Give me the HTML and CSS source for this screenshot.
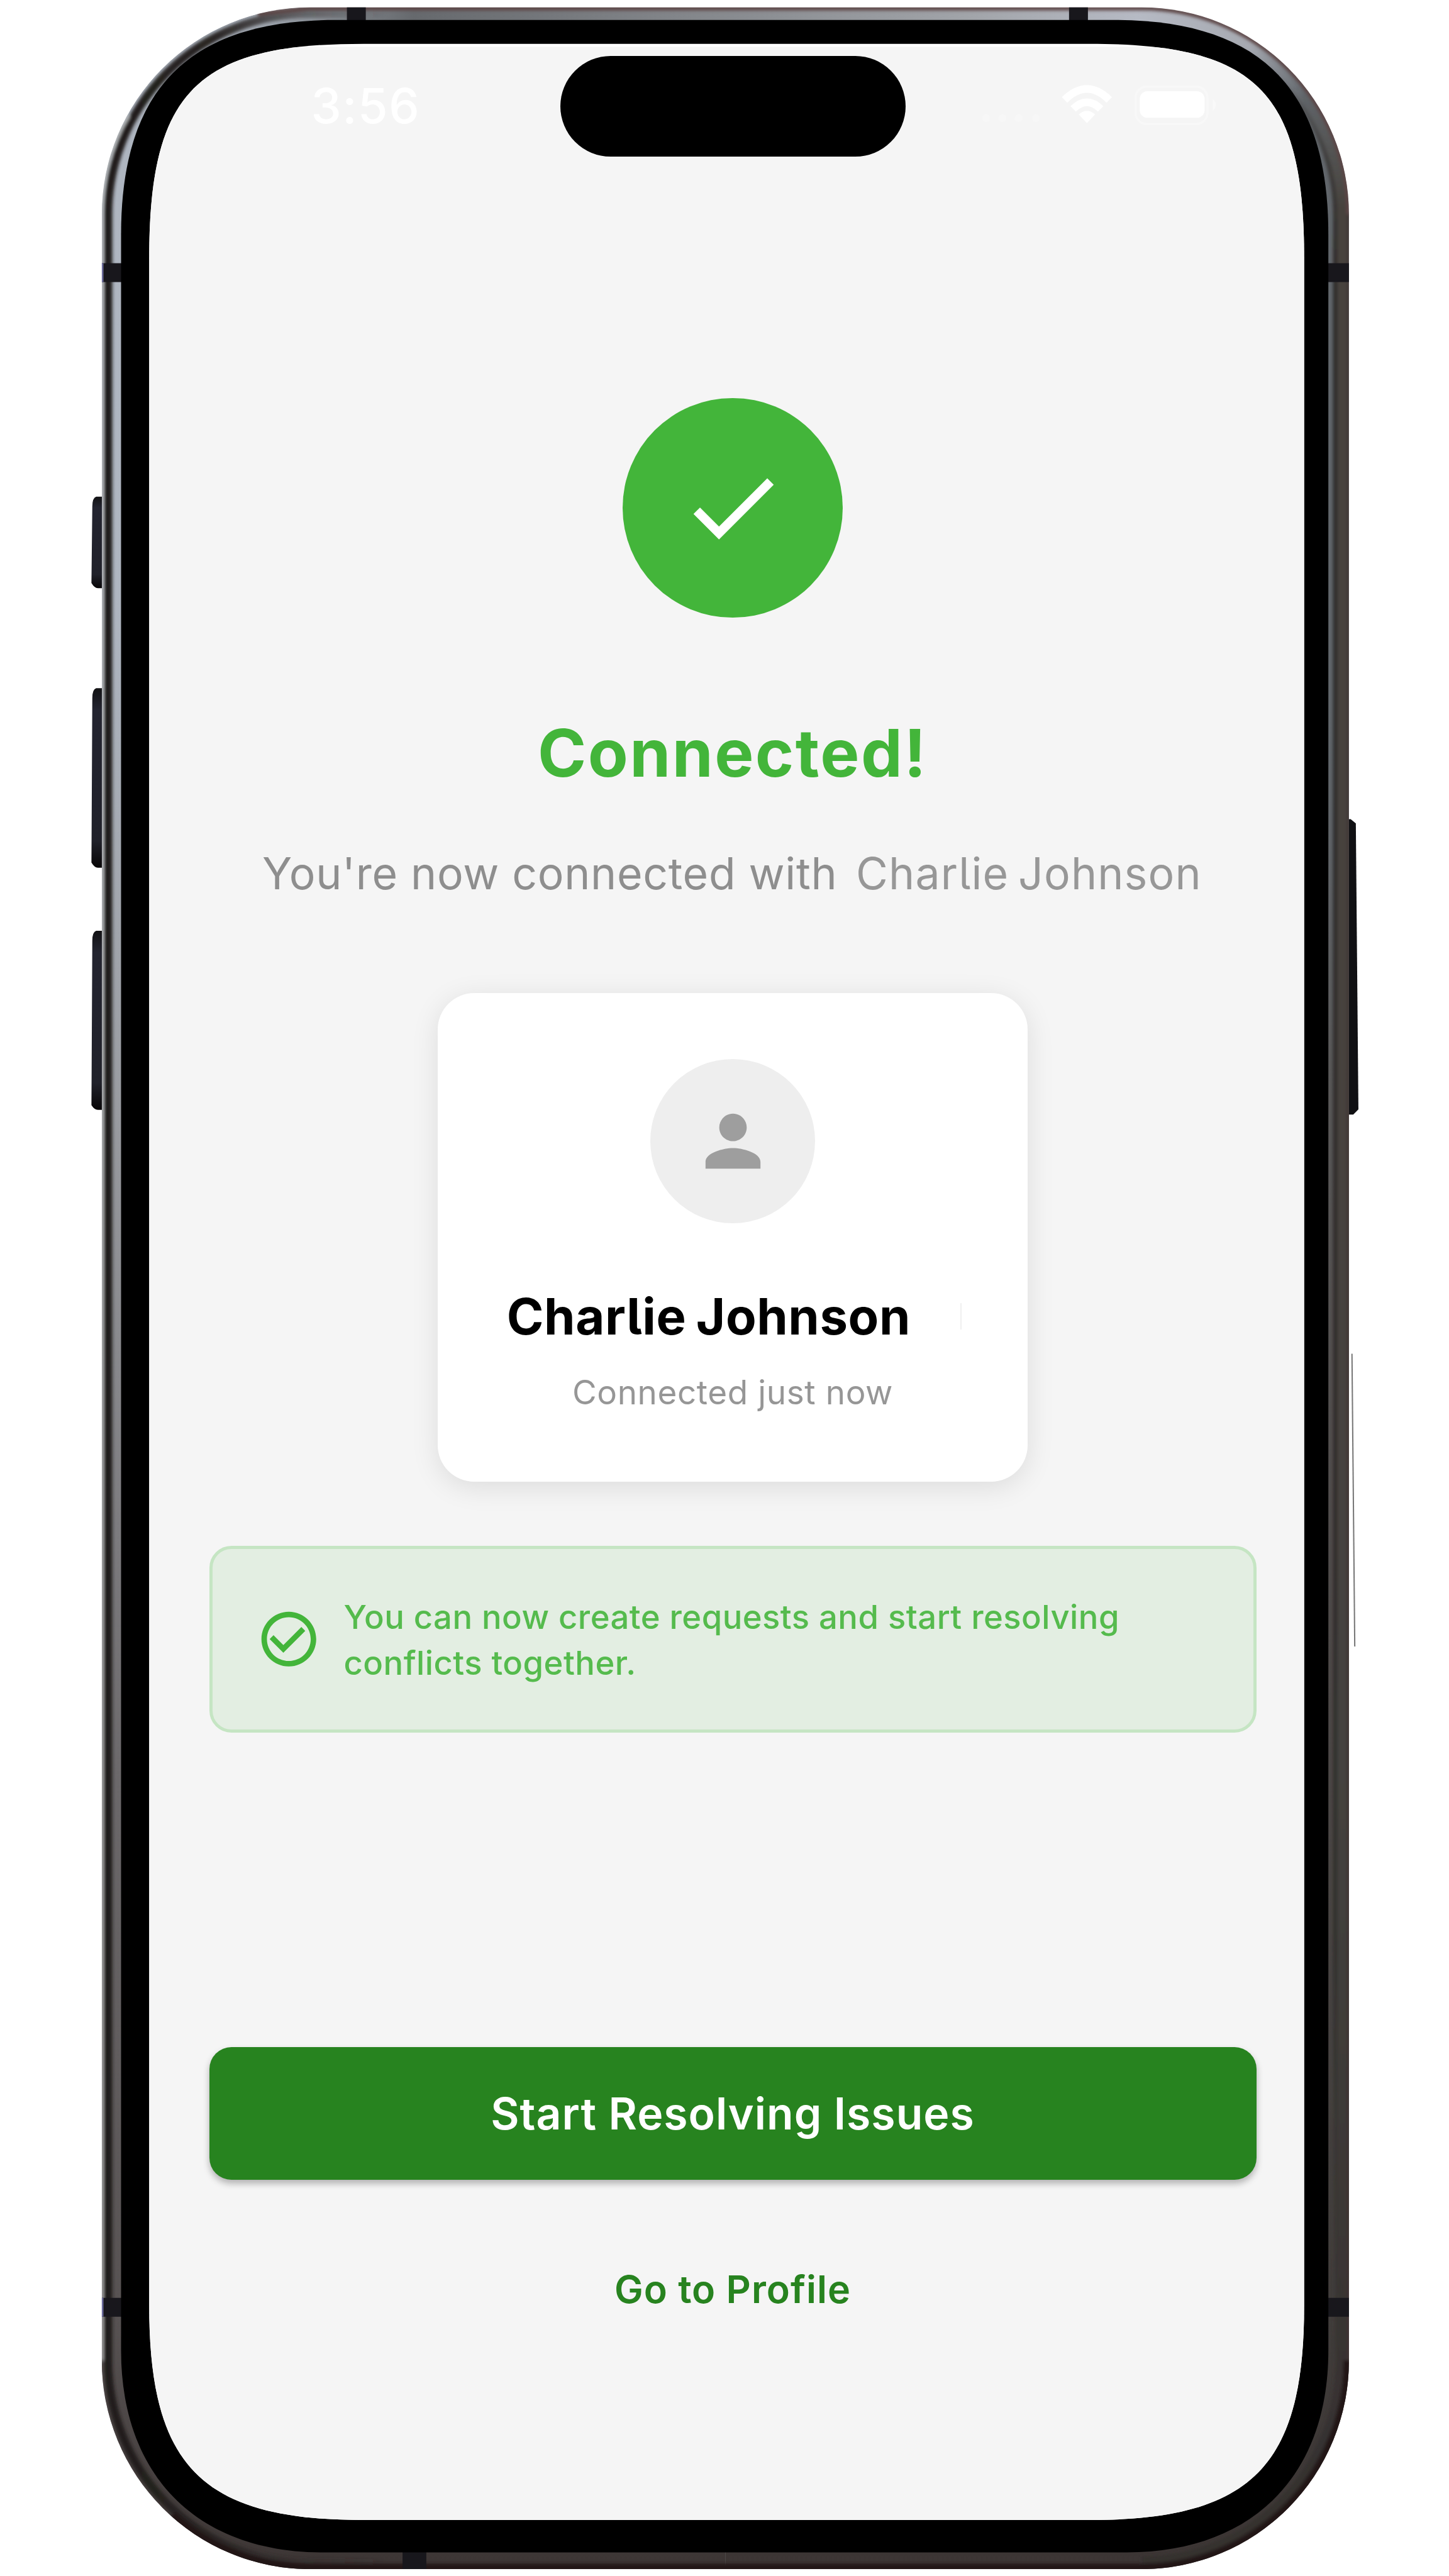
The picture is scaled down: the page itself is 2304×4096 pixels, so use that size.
FILE: index.html
```html
<!DOCTYPE html>
<html lang="en">
<head>
<meta charset="utf-8">
<title>Connected!</title>
<link rel="stylesheet" href="styles.css">
</head>
<body>
<div class="stage">
  <svg class="phone" viewBox="0 0 3375 6000" aria-hidden="true">
    <defs>
      <path id="body" d="M722 17H2659A483 483 0 0 1 3142 500V5498A483 486 0 0 1 2659 5984H722A485 486 0 0 1 237 5498V500A485 483 0 0 1 722 17Z"/>
      <path id="bezel" d="M782 46.500H2594C2935 46.500 3094 206 3094 546V5475C3094 5767 2916 5945 2624 5945H752C460 5945 282 5767 282 5475V546C282 206 441 46.500 782 46.500Z"/>
      <path id="glass" d="M847 102H2538C2927 102 3037.600 213 3037.600 602V5370C3037.600 5746 2914 5869.600 2538 5869.600H847C471 5869.600 347.500 5746 347.500 5370V602C347.500 213 458 102 847 102Z"/>
      <clipPath id="bodyClip"><use href="#body"/></clipPath>
      <clipPath id="glassClip"><use href="#glass"/></clipPath>
      <linearGradient id="metal" gradientUnits="userSpaceOnUse" x1="237" y1="0" x2="3142" y2="0">
        <stop offset="0" stop-color="#b0b7c2"/><stop offset=".13" stop-color="#a0a7b0"/><stop offset=".25" stop-color="#66696d"/>
        <stop offset=".7" stop-color="#a2a5aa"/><stop offset=".83" stop-color="#b6bac4"/><stop offset=".92" stop-color="#a6a9b1"/>
        <stop offset=".965" stop-color="#62676c"/><stop offset="1" stop-color="#62676c"/>
      </linearGradient>
      <linearGradient id="leftShade" gradientUnits="userSpaceOnUse" x1="0" y1="1400" x2="0" y2="5984">
        <stop offset="0" stop-color="#9a9da2" stop-opacity="0"/><stop offset=".26" stop-color="#999ba0"/>
        <stop offset=".6" stop-color="#6b686a"/><stop offset=".88" stop-color="#565151"/><stop offset="1" stop-color="#3c3534"/>
      </linearGradient>
      <linearGradient id="rightShade" gradientUnits="userSpaceOnUse" x1="0" y1="1600" x2="0" y2="5984">
        <stop offset="0" stop-color="#62666b" stop-opacity="0"/><stop offset=".2" stop-color="#5a5959"/>
        <stop offset=".5" stop-color="#4e4a49"/><stop offset=".88" stop-color="#403c3a"/><stop offset="1" stop-color="#3c3534"/>
      </linearGradient>
      <linearGradient id="darkBand" gradientUnits="userSpaceOnUse" x1="237" y1="0" x2="900" y2="0">
        <stop offset="0" stop-color="#1f1c19"/><stop offset=".4" stop-color="#2a2625"/><stop offset="1" stop-color="#332d2d" stop-opacity="0"/>
      </linearGradient>
      <linearGradient id="rightBand" gradientUnits="userSpaceOnUse" x1="0" y1="200" x2="0" y2="5800">
        <stop offset="0" stop-color="#47423d" stop-opacity="0"/><stop offset=".05" stop-color="#47433e"/>
        <stop offset=".7" stop-color="#45433f"/><stop offset="1" stop-color="#35302f"/>
      </linearGradient>
      <linearGradient id="innerBand" gradientUnits="userSpaceOnUse" x1="0" y1="100" x2="0" y2="5600">
        <stop offset="0" stop-color="#4c4d4f" stop-opacity="0"/><stop offset=".05" stop-color="#3e3c3b"/>
        <stop offset=".1" stop-color="#2e2b29"/><stop offset=".8" stop-color="#31302d"/><stop offset="1" stop-color="#35322f" stop-opacity="0"/>
      </linearGradient>
      <filter id="soft" filterUnits="userSpaceOnUse" x="0" y="0" width="3375" height="6000"><feGaussianBlur stdDeviation="4"/></filter>
      <linearGradient id="key" x1="0" y1="0" x2="0" y2="1">
        <stop offset="0" stop-color="#121214"/><stop offset=".12" stop-color="#232430"/><stop offset=".85" stop-color="#20212a"/><stop offset="1" stop-color="#080607"/>
      </linearGradient>
    </defs>

    <!-- side buttons -->
    <g fill="url(#key)">
      <path d="M240 1157H224Q215 1160 215 1180L213 1358Q220 1370 228 1370H240Z"/>
      <path d="M240 1603H224Q215 1606 215 1626L213 2009Q220 2021 228 2021H240Z"/>
      <path d="M240 2168H224Q215 2171 215 2191L213 2574Q220 2585 228 2585H240Z"/>
    </g>
    <path fill="#101013" d="M3138 1908H3146L3158 1918L3164 2584L3152 2596H3138Z"/>
    <path stroke="#777" stroke-width="3" d="M3149 3153L3155.500 3835"/>

    <!-- metal band -->
    <g clip-path="url(#bodyClip)">
      <use href="#body" fill="url(#metal)"/>
      <rect x="230" y="1400" width="1460" height="4600" fill="url(#leftShade)"/>
      <rect x="1690" y="1600" width="1460" height="4400" fill="url(#rightShade)"/>
      <g fill="none" filter="url(#soft)">
        <path stroke="url(#darkBand)" stroke-width="19" d="M900 32H722A470 468 0 0 0 252 500V5498A470 472 0 0 0 722 5970H900"/>
        <path stroke="url(#rightBand)" stroke-width="30" d="M2659 30A470 470 0 0 1 3126 500V5498A470 472 0 0 1 2659 5970"/>
        <path stroke="url(#innerBand)" stroke-width="10" d="M2659 50A452 452 0 0 1 3110 500V5498A452 452 0 0 1 2659 5950"/>
        <path stroke="#5c4544" stroke-width="10" d="M600 32L722 19H2659A481 481 0 0 1 3141 500"/>
        <path stroke="#3f3232" stroke-width="7" d="M3141 500V5498"/>
        <path stroke="#241819" stroke-width="24" d="M3141 5498A482 484 0 0 1 2659 5983H722A484 484 0 0 1 400 5860"/>
        <path stroke="#b9bbbb" stroke-width="6" d="M300 270Q238 370 237 500V5498"/>
      </g>
      <path fill="#18171c" d="M808 10h44v60h-44zM2490 10h44v60h-44zM230 613h60v44h-60zM3080 613h70v44h-70zM230 5352h60v44h-60zM3080 5352h70v44h-70zM937.600 5930h55.400v60h-55.400z"/>
      <path fill="#6a6a9a" d="M237 613h4v44h-4zM237 5352h4v44h-4z"/>
    </g>
    <use href="#bezel"/>
    <use href="#glass" fill="#fff"/>
    <rect x="340" y="109" width="2710" height="5770" fill="#f5f5f5" clip-path="url(#glassClip)"/>
  </svg>

  <main class="screen">
    <header class="status">
      <span class="time">3:56</span>
      <span class="island"></span>
      <svg class="dots" viewBox="0 0 136 20"><g fill="#f7f7f7"><circle cx="10" cy="10" r="9"/><circle cx="48" cy="10" r="9"/><circle cx="86" cy="10" r="9"/><circle cx="126" cy="10" r="9"/></g></svg>
      <svg class="wifi" viewBox="0 0 118 90">
        <path fill="none" stroke="#fff" stroke-width="18" d="M7 36Q59 -15 111 36M27 57Q59 26 91 57"/>
        <path fill="#fff" d="M40 70Q59 53 78 70L59 90Z"/>
      </svg>
      <svg class="battery" viewBox="0 0 196 92">
        <rect x="2.500" y="2.500" width="167" height="87" rx="26" fill="none" stroke="#f8f8f8" stroke-width="5"/>
        <rect x="12" y="13" width="151" height="62" rx="18" fill="#fff"/>
        <path fill="#f9f9f9" d="M182 31q14 14 0 28z"/>
      </svg>
    </header>

    <div class="badge">
      <svg viewBox="0 0 24 24"><path fill="#fff" d="M9 16.170 4.830 12l-1.420 1.410L9 19 21 7l-1.410-1.410z"/></svg>
    </div>
    <h1 class="title">Connected!</h1>
    <p class="subtitle"><span class="lead">You're now connected with</span><span class="who">Charlie Johnson</span></p>

    <section class="card">
      <div class="avatar">
        <svg viewBox="0 0 24 24"><path fill="#9e9e9e" d="M12 12c2.210 0 4-1.790 4-4s-1.790-4-4-4-4 1.790-4 4 1.790 4 4 4zm0 2c-2.670 0-8 1.340-8 4v2h16v-2c0-2.660-5.330-4-8-4z"/></svg>
      </div>
      <div class="nameRow"><h2 class="name">Charlie Johnson</h2><i class="tick"></i></div>
      <p class="when">Connected just now</p>
    </section>

    <section class="info">
      <svg viewBox="0 0 24 24"><path fill="#43b53a" d="M16.590 7.580 10 14.170l-3.590-3.580L5 12l5 5 8-8zM12 2C6.480 2 2 6.480 2 12s4.480 10 10 10 10-4.480 10-10S17.520 2 12 2zm0 18c-4.420 0-8-3.580-8-8s3.580-8 8-8 8 3.580 8 8-3.580 8-8 8z"/></svg>
      <p>You can now create requests and start resolving<br>conflicts together.</p>
    </section>

    <button class="primary">Start Resolving Issues</button>
    <a class="link">Go to Profile</a>
  </main>
</div>
</body>
</html>
```
FILE: styles.css
```css
* { box-sizing: border-box; margin: 0; }
body { background: #fff; font-family: Inter, "Liberation Sans", sans-serif; }

.stage { position: relative; width: 2304px; height: 4096px; overflow: hidden; }
.phone { position: absolute; left: 0; top: 0; width: 2304px; height: 4096px; }

.screen {
  position: relative;
  display: flex;
  flex-direction: column;
  align-items: center;
  width: 1665px;
  margin-left: 332.5px;
  padding-top: 89px;
}

.status { display: flex; align-items: center; width: 100%; height: 160px; }
.time { width: 396px; margin-left: 162px; color: #fff; font-size: 77px; font-weight: 500; letter-spacing: 1.5px; line-height: 90px; padding-bottom: 3px; }
.island { width: 549px; height: 160px; border-radius: 80px; background: #000; }
.dots { width: 93px; height: 14px; margin: 38px 0 0 121px; }
.wifi { width: 80.5px; height: 62px; margin: 0 0 8px 34px; }
.battery { width: 134px; height: 63px; margin: 0 0 4px 36px; }

.badge {
  display: flex; align-items: center; justify-content: center;
  width: 349.5px; height: 349.5px; margin-top: 383.5px;
  border-radius: 50%; background: #43b53a;
}
.badge svg { width: 174px; height: 174px; }

.title {
  margin-top: 144.5px; color: #43b53a;
  font-size: 104.5px; font-weight: 700; line-height: 140px; letter-spacing: 2.4px;
}

.subtitle {
  display: flex; margin-top: 77.5px; width: 1500px;
  font-size: 69.7px; line-height: 90px; white-space: nowrap;
}
.lead { width: 944px; margin-left: 2px; color: #8e8e8e; letter-spacing: .7px; }
.who { color: #979797; font-feature-settings: "cv05"; letter-spacing: 1.15px; word-spacing: -6px; }

.card {
  display: flex; flex-direction: column; align-items: center;
  width: 938.7px; height: 777px; margin-top: 145px; padding-top: 104.5px;
  border-radius: 58px; background: #fff;
  box-shadow: 0 8.7px 43.5px rgba(0, 0, 0, .1);
}
.avatar {
  display: flex; align-items: center; justify-content: center;
  width: 261.5px; height: 261.5px; border-radius: 50%; background: #eee;
}
.avatar svg { width: 131px; height: 131px; }
.nameRow { display: flex; align-items: center; width: 100%; margin-top: 97.5px; padding-left: 110px; }
.name {
  width: 721px; color: #000; font-size: 79.5px; font-weight: 650; line-height: 100px;
  font-feature-settings: "cv05"; letter-spacing: .6px; word-spacing: -4px; white-space: nowrap;
}
.tick { width: 2px; height: 42px; background: #f0f0f0; }
.when { margin-top: 36.2px; color: #969696; font-size: 53px; line-height: 70px; letter-spacing: .6px; }

.info {
  display: flex; align-items: center; gap: 35.5px;
  width: 100%; height: 297px; margin-top: 101.9px; padding-left: 69px;
  border: 5px solid #c5e5c3; border-radius: 35px; background: #e3eee2;
}
.info svg { flex: none; width: 104.5px; height: 104.5px; }
.info p { padding-top: 4px; color: #55bb4d; font-size: 52.6px; font-weight: 450; line-height: 73.2px; letter-spacing: .46px; white-space: nowrap; }

.primary {
  width: 100%; height: 211px; margin-top: 500.5px; padding: 0;
  border: 0; border-radius: 35px; background: #27831f; color: #fff;
  font: 600 69.7px/90px Inter, "Liberation Sans", sans-serif; letter-spacing: 1px;
  box-shadow: 0 6px 11px rgba(0, 0, 0, .28);
}
.link { margin-top: 133.5px; color: #27831f; font-size: 61px; font-weight: 600; line-height: 80px; letter-spacing: 1px; }
```
